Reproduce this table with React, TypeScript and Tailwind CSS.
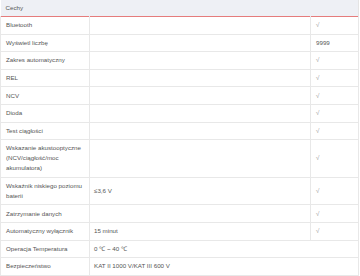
const rows: { label: string; value?: string; check?: string; span?: boolean }[] = [
  { label: 'Bluetooth', check: '√' },
  { label: 'Wyświetl liczbę', check: '9999' },
  { label: 'Zakres automatyczny', check: '√' },
  { label: 'REL', check: '√' },
  { label: 'NCV', check: '√' },
  { label: 'Dioda', check: '√' },
  { label: 'Test ciągłości', check: '√' },
  { label: 'Wskazanie akustooptyczne (NCV/ciągłość/moc akumulatora)', check: '√' },
  { label: 'Wskaźnik niskiego poziomu baterii', value: '≤3,6 V', check: '√' },
  { label: 'Zatrzymanie danych', check: '√' },
  { label: 'Automatyczny wyłącznik', value: '15 minut', check: '√' },
  { label: 'Operacja Temperatura', value: '0 ℃ ~ 40 ℃', span: true },
  { label: 'Bezpieczeństwo', value: 'KAT II 1000 V/KAT III 600 V', span: true },
];

export default function App() {
  return (
    <div className="w-[360px] h-[276px] bg-white overflow-hidden font-['Liberation_Sans',Arial,sans-serif] text-[6.2px] leading-[10px] text-[#555]">
      <table className="w-[358px] border-collapse table-fixed">
        <colgroup>
          <col className="w-[89px]" />
          <col className="w-[221px]" />
          <col className="w-[48px]" />
        </colgroup>
        <thead>
          <tr className="bg-[#eef0f5] border-b border-[#e57c7c]">
            <th colSpan={3} className="text-left font-normal px-[5px] py-[3px] border-r border-[#e4e4e4]">
              Cechy
            </th>
          </tr>
        </thead>
        <tbody>
          {rows.map((r) => (
            <tr key={r.label} className="border-b border-[#e8e8e8]">
              <td className="align-middle pl-[5px] pr-[2px] py-[3.3px] border-l border-r border-[#e8e8e8]">{r.label}</td>
              {r.span ? (
                <td colSpan={2} className="align-middle px-[4px] py-[3.3px] border-r border-[#e8e8e8]">{r.value}</td>
              ) : (
                <>
                  <td className="align-middle px-[4px] py-[3.3px] border-r border-[#e8e8e8]">{r.value}</td>
                  <td className={`align-middle px-[5px] py-[3.3px] border-r border-[#e8e8e8] ${r.check === '√' ? 'text-[#999]' : ''}`}>
                    {r.check}
                  </td>
                </>
              )}
            </tr>
          ))}
        </tbody>
      </table>
    </div>
  );
}
